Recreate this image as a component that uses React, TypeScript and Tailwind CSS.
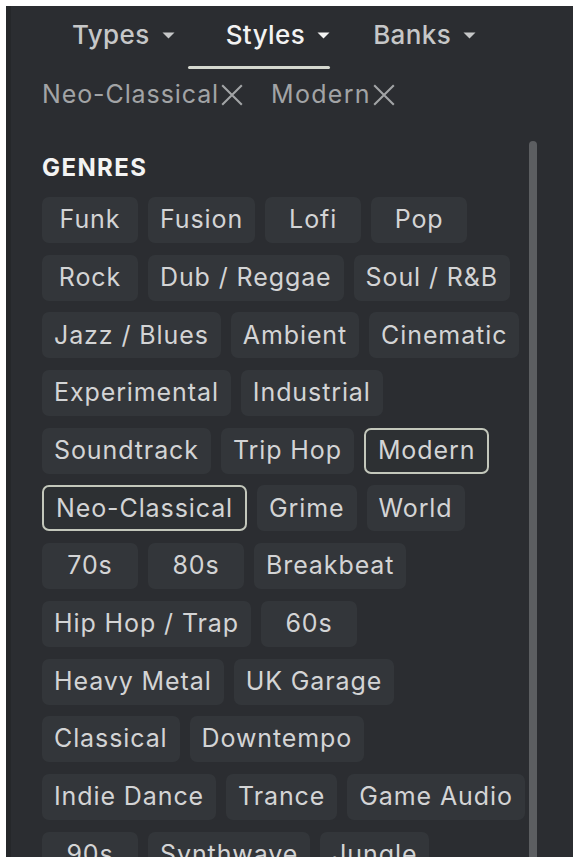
import React from 'react'

const rows: string[][] = [
  ['Funk', 'Fusion', 'Lofi', 'Pop'],
  ['Rock', 'Dub / Reggae', 'Soul / R&B'],
  ['Jazz / Blues', 'Ambient', 'Cinematic'],
  ['Experimental', 'Industrial'],
  ['Soundtrack', 'Trip Hop', 'Modern'],
  ['Neo-Classical', 'Grime', 'World'],
  ['70s', '80s', 'Breakbeat'],
  ['Hip Hop / Trap', '60s'],
  ['Heavy Metal', 'UK Garage'],
  ['Classical', 'Downtempo'],
  ['Indie Dance', 'Trance', 'Game Audio'],
  ['90s', 'Synthwave', 'Jungle'],
]

const selected = ['Modern', 'Neo-Classical']

function Caret() {
  return (
    <svg width="13" height="7" viewBox="0 0 13 7" className="ml-3 mt-[2px]">
      <path d="M0.5 0.5h12l-6 6z" fill="currentColor" />
    </svg>
  )
}

function Cross() {
  return (
    <svg width="24" height="24" viewBox="0 0 22 22" className="ml-[1px]">
      <path d="M2 2l18 18M20 2L2 20" stroke="currentColor" strokeWidth="1.9" />
    </svg>
  )
}

export default function App() {
  return (
    <div className="w-[576px] h-[862px] bg-white pt-[6px] pl-[6px] pr-[3px] overflow-hidden" style={{ fontFamily: 'Inter, "Liberation Sans", sans-serif' }}>
      <div className="h-[851px] bg-[#2b2d31] border-l-[5px] border-[#25272a] overflow-hidden flex flex-col">
        {/* Tabs */}
        <div className="h-[50px] mt-[3px] flex items-center text-[26px] font-medium tracking-[0.4px]">
          <div className="ml-[61px] flex items-center text-[#c6c7c8]">
            Types <Caret />
          </div>
          <div className="ml-[51px] flex items-center text-[#f2f2f2]">
            Styles <Caret />
          </div>
          <div className="ml-[43px] flex items-center text-[#c6c7c8]">
            Banks <Caret />
          </div>
        </div>
        <div className="mt-[7px] ml-[177px] w-[142px] h-[3px] rounded-full bg-[#d5d8cf]" />

        {/* Active filters */}
        <div className="mt-[6px] h-[40px] flex items-center text-[25px] tracking-[0.9px] text-[#a2a4a6] pl-[31px]">
          <div className="flex items-center">
            Neo-Classical<Cross />
          </div>
          <div className="flex items-center ml-[27px] tracking-[1.3px]">
            Modern<Cross />
          </div>
        </div>

        {/* Genres */}
        <div className="mt-[26px] flex flex-1 min-h-0">
          <div className="flex-1 pl-[31px]">
            <div className="mt-[12px] h-[30px] flex items-center text-[24px] font-bold text-[#f3f3f3] tracking-[1.4px]">
              GENRES
            </div>
            <div className="mt-[14px] flex flex-col gap-y-[11.7px]">
              {rows.map((row, i) => (
                <div key={i} className="flex gap-x-[10px]">
                  {row.map(g => (
                    <div
                      key={g}
                      className={`h-[46px] min-w-[96px] px-3 flex items-center justify-center whitespace-nowrap rounded-[7px] text-[25px] tracking-[0.9px] text-[#d3d4d5] ${
                        selected.includes(g)
                          ? 'border-2 border-[#c3c7bb] bg-[#2d3033]'
                          : 'bg-[#33363a]'
                      }`}
                    >
                      {g}
                    </div>
                  ))}
                </div>
              ))}
            </div>
          </div>
          <div className="w-[8px] mr-[36px] rounded-t-full bg-[#5c5e61]" />
        </div>
      </div>
    </div>
  )
}
